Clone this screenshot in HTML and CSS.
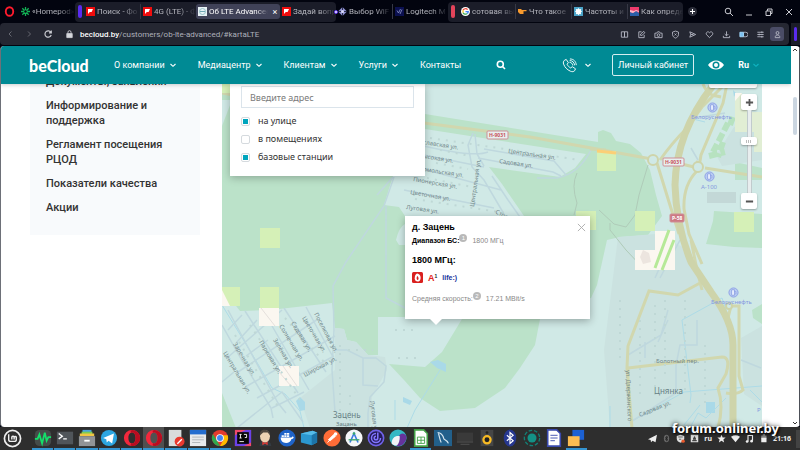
FILE: index.html
```html
<!DOCTYPE html>
<html lang="ru">
<head>
    <meta charset="UTF-8">
    <title>Об LTE Advanced</title>
    <link rel="stylesheet" href="styles.css">
</head>
<body>
    <!-- Shared icons -->
    <svg class="sprite" aria-hidden="true">
        <symbol id="onliner" viewBox="0 0 9 9"><path fill="#f00d0d" d="M0 0h9v9H0z"/><path fill="#fff" d="M2 2h5L5.6 5H3.8L2 7z"/></symbol>
        <symbol id="chevron" viewBox="0 0 8 8"><path d="M1.5 3 4 5.3 6.500 3" fill="none" stroke="currentColor" stroke-width="1.100"/></symbol>
        <symbol id="opera" viewBox="0 0 20 20"><path fill="#f2283c" fill-rule="evenodd" d="M10 1a9 9 0 1 0 0 18 9 9 0 0 0 0-18zm0 3c2.500 0 4 2.800 4 6s-1.500 6-4 6-4-2.800-4-6 1.500-6 4-6z"/><path fill="#b80d20" fill-rule="evenodd" d="M10 1c5 0 9 4 9 9s-4 9-9 9c-1.500-.5-2-1.500-1-3.200 3.500 1 5-2.300 5-5.800s-1.500-6.800-5-5.800C8 2.500 8.500 1.500 10 1z"/></symbol>
        <symbol id="fuel" viewBox="0 0 12 12"><circle cx="6" cy="6" r="5" fill="#b9cdf2" stroke="#8c9fe6"/><path d="M4 3h3v6H4zM7 5h1.500v3" fill="#eef4ff" stroke="#8094e0" stroke-width=".8"/></symbol>
    </svg>

    <!-- Browser tabs -->
    <div class="tabs">
        <button class="opera-menu" aria-label="Меню"><svg viewBox="0 0 10 10"><ellipse cx="5" cy="5" rx="3.400" ry="3.900" fill="none" stroke="#ff1b2d" stroke-width="1.700"/></svg></button>
        <button class="tab"><svg viewBox="0 0 9 9"><path d="M4.500 0v9M0 4.500h9M1.300 1.300l6.400 6.400M7.700 1.300 1.300 7.700" stroke="#12b155" stroke-width="1.300"/><circle cx="4.500" cy="4.500" r="1.200" fill="#02040f"/></svg><span>«Homepod»</span></button>
        <div class="island">
            <i class="island-mark purple"></i>
            <button class="tab"><svg><use href="#onliner"/></svg><span>Поиск - Фо</span></button>
            <button class="tab divided"><svg><use href="#onliner"/></svg><span>4G (LTE) - Ф</span></button>
            <button class="tab active"><svg viewBox="0 0 9 9"><path fill="#e8f2f5" d="M0 0h9v9H0z"/><circle cx="4.500" cy="4.500" r="3" fill="none" stroke="#93bfc6"/><path d="M2 4.500h5" stroke="#6fa8b4"/></svg><span>Об LTE Advanced</span><b>×</b></button>
            <button class="tab"><svg><use href="#onliner"/></svg><span>Задай вопр</span></button>
        </div>
        <div class="loose">
            <button class="tab"><svg viewBox="0 0 9 9"><path fill="#8d8fd0" d="m4.500 0 4.500 4.500L4.500 9 0 4.500z"/><path d="M4.500 0v9M0 4.500h9" stroke="#02040f" stroke-width=".7"/><circle cx="4.500" cy="4.500" r="1.500" fill="#dcdcff"/></svg><span>Выбор WiF</span></button>
            <button class="tab divided"><svg viewBox="0 0 9 9"><path fill="#0b1050" d="M0 0h9v9H0z"/><path d="M2 3.500 3.500 6l2-4M5 7l2-4.500" stroke="#8f97c9" fill="none" stroke-width=".8"/></svg><span>Logitech M</span></button>
            <i class="alert"></i>
        </div>
        <div class="island second">
            <i class="island-mark red"></i>
            <button class="tab"><svg viewBox="0 0 9 9"><circle cx="4.500" cy="4.500" r="4.500" fill="#fff"/><path d="M6.600 2.600A2.800 2.800 0 0 0 2 3.300" fill="none" stroke="#ea4335" stroke-width="1.200"/><path d="M2 3.300v2.400" stroke="#fbbc05" stroke-width="1.200"/><path d="M2 5.700a2.800 2.800 0 0 0 4.400.7" fill="none" stroke="#34a853" stroke-width="1.200"/><path d="M4.500 4.600h2.800a3 3 0 0 1-.9 1.900" fill="none" stroke="#4285f4" stroke-width="1.200"/></svg><span>сотовая вы</span></button>
            <button class="tab divided"><svg viewBox="0 0 9 9"><path fill="#f79a2e" d="M0 2h3l1 1h4.500v1.200H5.500V7H2L0 5z"/></svg><span>Что такое</span></button>
            <button class="tab divided"><svg viewBox="0 0 9 9"><path fill="#4aa3c8" d="M0 0h9v9H0z"/><path fill="#fff" d="m4.500 1 1 1.300 1.700-.4-.3 1.700 1.100 1-1.200 1 .3 1.600-1.600-.2-1 1.200-1-1.200-1.600.2.300-1.600-1.200-1 1.100-1-.3-1.700 1.700.4z"/></svg><span>Частоты и</span></button>
            <button class="tab divided"><svg viewBox="0 0 9 9"><path fill="#ee3b6c" d="M0 0h9v9H0z"/><path fill="#2a5fa8" d="M0 5l3 1 3-2 3 2v3H0z"/><path fill="#f9b9c8" d="M0 3l4 1 2-1 3 1v1L6 4 3 6 0 5z"/></svg><span>Как опреде</span></button>
        </div>
        <button class="new-tab" aria-label="Новая вкладка"><svg viewBox="0 0 9 9"><path d="M4.500 2v5M2 4.500h5"/></svg></button>
        <div class="window-buttons">
            <button aria-label="Поиск"><svg viewBox="0 0 10 10"><circle cx="4" cy="4" r="2.800"/><path d="m6 6 3 3"/></svg></button>
            <button aria-label="Свернуть"><svg viewBox="0 0 10 10"><path d="M2 8h6"/></svg></button>
            <button aria-label="Развернуть"><svg viewBox="0 0 10 10"><path d="M2 4h4.500v4.500H2zM3.500 4V2H8v4.500H6.500"/></svg></button>
            <button aria-label="Закрыть"><svg viewBox="0 0 10 10"><path d="m2 2 6 6M8 2 2 8"/></svg></button>
        </div>
    </div>

    <!-- Address bar -->
    <div class="toolbar">
        <div class="address">
            <button class="dim" aria-label="Назад"><svg viewBox="0 0 10 10"><path d="M6.500 2.500 4 5l2.500 2.500"/></svg></button>
            <button class="dim" aria-label="Вперёд"><svg viewBox="0 0 10 10"><path d="M4 2.500 6.500 5 4 7.500"/></svg></button>
            <button aria-label="Обновить"><svg viewBox="0 0 10 10"><path stroke-width="1.200" d="M8 3.500A3.200 3.200 0 1 0 8.200 6M8.300 1.500v2.300H6"/></svg></button>
            <svg class="padlock" viewBox="0 0 10 10"><path fill="#d6d8dd" d="M2 4.500h6V9H2z"/><path d="M3.300 4.500V3a1.700 1.700 0 0 1 3.400 0v1.500"/></svg>
            <span class="url"><b>becloud.by</b>/customers/ob-lte-advanced/#kartaLTE</span>
            <div class="tools">
                <button aria-label="Чтение"><svg viewBox="0 0 10 10"><path d="M1.500 2H5v6H1.500zM5 2h3.500v6H5z"/></svg></button>
                <button aria-label="Заметка"><svg viewBox="0 0 10 10"><path d="M5 2H2v6.500h6V5.500M4 6V4.500L7.500 1.500 8.800 3 5.500 6z"/></svg></button>
                <button aria-label="Снимок"><svg viewBox="0 0 10 10"><path d="M1 3.500h2l1-1.500h2l1 1.500h2v5H1z"/><circle cx="5" cy="5.700" r="1.500"/></svg></button>
                <button aria-label="Блокировка"><svg viewBox="0 0 10 10"><path d="M5 1.200 8.300 2.300V5c0 2-1.500 3.300-3.300 4C3.200 8.300 1.700 7 1.700 5V2.300zM4 4l2 2M6 4 4 6"/></svg></button>
                <button aria-label="Отправить"><svg viewBox="0 0 10 10"><path d="M2 2l6.500 3L2 8l1-3zM3 5h3"/></svg></button>
                <button aria-label="Избранное"><svg viewBox="0 0 10 10"><path d="M5 8.500 1.800 5.300C.2 3.500 3 .5 5 3c2-2.500 4.800.5 3.200 2.300z"/></svg></button>
                <button aria-label="Загрузки"><svg viewBox="0 0 10 10"><path d="M5 1.500v5M3 4.500l2 2 2-2M1.500 6.500v2h7v-2"/></svg></button>
                <button aria-label="Батарея"><svg viewBox="0 0 10 10"><path fill="#7cc0f0" stroke="#a5dcff" d="M1 2.500h4v5H1z"/><path d="M5 2.500h2.500a2.500 2.500 0 0 1 0 5H5"/></svg></button>
                <button aria-label="Настройки"><svg viewBox="0 0 10 10"><path d="M1.500 2.500h7M1.500 5h7M1.500 7.500h7M6.500 1.500v2M3.500 4v2M6.500 6.500v2"/></svg></button>
                <button class="profile" aria-label="Профиль"><svg viewBox="0 0 10 10"><circle cx="5" cy="3.300" r="1.600"/><path d="M2.500 8.500v-1C2.500 5 7.500 5 7.500 7.500v1z"/></svg></button>
            </div>
        </div>
        <div class="panel-toggle"><i></i></div>
    </div>

    <!-- Page -->
    <div class="page">
        <div class="site">
            <header>
                <a class="logo" href="#">beCloud</a>
                <nav>
                    <a href="#">О компании<svg><use href="#chevron"/></svg></a>
                    <a href="#">Медиацентр<svg><use href="#chevron"/></svg></a>
                    <a href="#">Клиентам<svg><use href="#chevron"/></svg></a>
                    <a href="#">Услуги<svg><use href="#chevron"/></svg></a>
                    <a href="#">Контакты</a>
                </nav>
                <button class="find" aria-label="Поиск"><svg viewBox="0 0 10 10"><circle cx="4.300" cy="4.300" r="3"/><path d="M6.500 6.500 9 9"/></svg></button>
                <div class="header-right">
                    <button class="phone" aria-label="Телефон">
                        <svg viewBox="0 0 16 16"><path d="M2.500 2.500 4.500 1.500 6.800 5 5.400 6.600c.8 1.900 2 3 3.900 4l1.600-1.400 3.500 2.300-.9 2c-1 1.200-2.600 1.400-4.500.6C5.500 12.500 3 10 1.700 6.500c-.6-1.600-.2-3 .8-4zM8 4.500c2 .2 3.300 1.500 3.500 3.500M8.200 2.700c3 .1 5 2 5.200 5.100M8.400 1c4 0 6.600 2.600 6.800 6.600"/></svg>
                        <svg class="arrow"><use href="#chevron"/></svg>
                    </button>
                    <a class="cabinet" href="#">Личный кабинет</a>
                    <button class="eye" aria-label="Версия для слабовидящих"><svg viewBox="0 0 16 10"><path fill="#fff" fill-rule="evenodd" d="M0 5c4-6 12-6 16 0-4 6-12 6-16 0zm8-3.500a3.500 3.500 0 1 0 0 7 3.500 3.500 0 0 0 0-7z"/><circle cx="8" cy="5" r="2" fill="#fff"/></svg></button>
                    <button class="lang">Ru<svg class="arrow"><use href="#chevron"/></svg></button>
                </div>
            </header>

            <main>
                <aside>
                    <a href="#">Документы, заявления</a>
                    <a href="#">Информирование и поддержка</a>
                    <a href="#">Регламент посещения РЦОД</a>
                    <a href="#">Показатели качества</a>
                    <a href="#">Акции</a>
                </aside>

                <section class="map">
                    <svg class="map-canvas" viewBox="222 84 540 344" preserveAspectRatio="xMinYMin slice">
                        <path class="land" d="M222 84h540v344H222z"/>

                        <!-- forest -->
                        <path class="forest" d="M222 84H425V114L598 142V132L603 130 611 133 616 141 630 144 641 153 650 170 656 195 662 216 648 235 620 237 607 240 603 258 597 285 591 298 550 305 540 319 535 345 520 368 505 388 475 408 440 411 420 398 404 380 389 364 425 367 442 352 462 319V317H378V355H368L356 342 347 340 344 329 335 328 332 303 270 310 240 311 222 288z"/>
                        <path class="forest" d="M222 393 236 428H222zM706 244l7-23 1-10 48 3v34l-28-1zM752 310l10-6v20l-9-6z"/>
                        <path class="forest" d="M735 180h27v-12l-27-6z"/>
                        <path class="land" d="M393 176 425 129 586 154 575 168 560 177 489 167 502 184 524 216H405L399 207 384 205z"/>
                        <path class="land" d="M405 224q-6 3-9 16l3 5h6z"/>
                        <path class="land" d="M222 100h10l-10 26z"/>
                        <path class="town" d="M335 328 344 329 347 340 356 342 368 355 385 357 387 370 372 397 370 428H310L300 398 335 370zM618 237 656 234 685 248 727 312 732 345V428H610L604 350z"/>
                        <path class="town" d="M741 338l21-12v80l-18-12zM716 155l18-28 28-6v39l-40 6z"/>
                        <path fill="#c3d8d7" d="M707 192h29v11h-29z"/>

                        <!-- water -->
                        <path class="water-fill" d="M296 401l4-4 5 5v8l-5 1zM403 397l9 4-2 4-7-3zM430 362l8-2 8 4v8l-9-4zM706 402h9v11h-9zM733 90l3 3-2 4z"/>
                        <path class="river" d="M222 305 252 354 272 388 285 394 300 411 304 428M440 370 415 410 407 428M395 420v-20M682 320l40-22 12 35M682 320l9 75-1 8M634 420l50-28 78-6M610 428V406M750 390l20 20M690 428l8-15 8 5 20-20M700 405l-16 20M705 122l-12-3"/>

                        <!-- minor streets -->
                        <path class="street" d="M394 177 384 206 346 262 333 286 334 330 332 370 335 412M386 206V298L407 309M393 177 377 195M335 350h12l16 8h13l10 8-2 16-14 15-2 16v17M363 358v27l15 1M415 144q58 14 73 8M424 155l60 12M419 168l82 22M404 190l90 18M473 133l-5 12 4 22 12 13 20 34M475 134l2 20 7 12M484 149l70 12 12 14M478 158l75 14 8 4M591 150q-12 24-34 28h-20M492 176l16 24 14 20"/>
                        <path class="street" d="M222 325l18 32 31 51 2 10M228 310l50 93 8 10M245 311l53 82M264 312l45 78M284 308l42 64M306 307l27 50M227 358l55-48M238 372l80-53M247 386l88-50M257 398l77-42M222 382l12-10M237 428l45-36 21 30M228 330l14-15M236 343l21-23M246 356l22-16M272 408l32-16"/>
                        <path class="street" d="M628 355l33-20 7-25M668 320l-10 22M645 358v-16M697 320v25h-17l-4 20v28l-47 30M698 160l-7-12M700 117l25-4M655 278 672 240M660 278 680 240M741 360l20 8"/>

                        <!-- main roads -->
                        <path class="road gold" d="M222 93 233 95M424 123 530 137 597 149 657 160M660 160q12-17 26-31l16-22 22-22M657 163l12 39 10 32M590 149l16 1M669 161l25 6M694 169l4-8M699 167l2-12 22-52 4-19M705 168l57 9M697 171q-14 14-13 38l5 25 13 30M703 84q3 8 9 11l9 2M691 240l6 30 5 20M728 318l3-12h8v70l4 14q-5 5-17 3M718 428q6-22 0-40l8-14q5-17-4-17l-94 11M700 283l-22 12-29-4-21 55-1 22 5 60M628 367v22"/>
                        <path class="highway" d="M714 84Q676 132 675 185 676 225 691 262L711 292Q733 322 733 345V428"/>
                        <circle class="ring" cx="653" cy="160" r="5"/><circle class="ring" cx="698" cy="167" r="5"/><circle class="ring" cx="729" cy="306" r="3"/>
                        <path class="trail" d="M648 165l-9 30-4 20-9 12-12-3-15-14M610 223v7l16 20 18 19M577 173q-6 12 0 30l-3 12"/>
                        <path d="M713 152l15-29M723 142l-5 15M709 156l16-4M730 125l3-8" fill="none" stroke="#b7e2c0" stroke-width="6" stroke-dasharray="9 3"/>

                        <!-- coverage cells -->
                        <path class="cell" d="M222 84h8v9h-8zM260 228h20v20h-20zM222 287h18v19h-18zM260 287h19v21h-19zM597 151h19v20h-19zM576 211h20v19h-20zM635 211h20v20h-20zM734 212h20v20h-20z"/>
                        <path class="cell-pale" d="M735 93h7v7h8v12h12v40h-8v-20h-19z"/>
                        <path class="cell-empty" d="M259 308h20v18h-20zM279 366h20v20h-20zM222 290l8 16h-8zM655 231h20v39h-40v-20h20zM735 93h7l-7 8z"/>
                        <path d="M655 268 669 230M662 270 674 240" stroke="#b6e998" stroke-width="3"/>
                        <path d="M597 151l19 2" stroke="#fbcf76" stroke-width="3"/>
                        <path d="M261 308l14 18M283 366l14 20M279 372l12 14" stroke="#e5e0dc"/>
                        <path d="M643 250l6 3 2 9-8 2-3-7z" fill="#ece5df"/>

                        <!-- houses -->
                        <path class="houses" d="M430 138l150 22M440 150l30 6M436 163l32 6M427 178l45 9M415 199l90 14M235 335l45 75M250 325l50 75M285 318l40 45M340 345v75M350 395v30M655 305v90M665 300v80M640 320v80M685 300v90M705 345v60M620 300v60M348 350h25M395 330h20M398 358h20"/>

                        <!-- labels -->
                        <g class="street-name">
                            <text transform="translate(508 153) rotate(8)">Центральная ул.</text>
                            <text transform="translate(499 163) rotate(8)">Садовая ул.</text>
                            <text transform="translate(423 144) rotate(9)">славская ул.</text>
                            <text transform="translate(423 158) rotate(9)">ысокая ул.</text>
                            <text transform="translate(423 171) rotate(9)">омольская ул.</text>
                            <text transform="translate(413 181) rotate(10)">Пионерская ул.</text>
                            <text transform="translate(410 194) rotate(10)">Цветочная ул.</text>
                            <text transform="translate(406 209) rotate(8)">Луговая ул.</text>
                            <text transform="translate(474 207) rotate(-82)">Центральная ул.</text>
                            <text transform="translate(495 213) rotate(28)">Стор</text>
                            <text transform="translate(223 353) rotate(59)">Центральная ул.</text>
                            <text transform="translate(233 344) rotate(59)">Заречная ул.</text>
                            <text transform="translate(259 342) rotate(59)">Парковая ул.</text>
                            <text transform="translate(273 340) rotate(59)">Зелёная ул.</text>
                            <text transform="translate(279 326) rotate(59)">Солнечная ул.</text>
                            <text transform="translate(291 323) rotate(59)">Садовая ул.</text>
                            <text transform="translate(302 318) rotate(59)">Цветочная ул.</text>
                            <text transform="translate(314 314) rotate(62)">Поселковая ул.</text>
                            <text transform="translate(305 377) rotate(-28)">Широкая ул.</text>
                            <text transform="translate(370 401) rotate(83)">Луговая у</text>
                            <text transform="translate(626 370) rotate(88)">ул. Дзержинского</text>
                            <text transform="translate(640 417) rotate(-22)">Садовая ул.</text>
                            <text x="656" y="363">Болотный пер.</text>
                        </g>
                        <text class="place" x="333" y="418">Зацень</text>
                        <text class="place small" x="336" y="426">Зацань</text>
                        <text class="place" x="654" y="394">Цнянка</text>
                        <text class="station" x="691" y="119">Белоруснефть</text>
                        <text class="station" x="701" y="189">А-100</text>
                        <text class="station" x="711" y="304">Белоруснефть</text>
                        <text class="station" x="757" y="412">Р</text>
                        <use href="#fuel" x="707" y="102" width="11" height="11"/>
                        <use href="#fuel" x="704" y="171" width="11" height="11"/>
                        <use href="#fuel" x="728" y="287" width="11" height="11"/>
                        <g class="shield">
                            <rect x="487" y="131" width="21" height="8" rx="1"/><text x="489" y="137">Н-9031</text>
                            <rect x="663" y="158" width="21" height="8" rx="1"/><text x="665" y="164">Н-9031</text>
                            <rect class="filled" x="670" y="214" width="14" height="8" rx="1"/><text class="white" x="672" y="220">Р-58</text>
                        </g>
                    </svg>

                    <form class="filter">
                        <input type="text" placeholder="Введите адрес" aria-label="Введите адрес">
                        <label><input type="checkbox" checked>на улице</label>
                        <label><input type="checkbox">в помещениях</label>
                        <label><input type="checkbox" checked>базовые станции</label>
                    </form>

                    <div class="balloon">
                        <button class="close" aria-label="Закрыть"><svg viewBox="0 0 10 10"><path d="m1 1 8 8M9 1 1 9"/></svg></button>
                        <h3>д. Зацень</h3>
                        <p class="range"><b>Диапазон БС:</b><sup>1</sup><span>1800 МГц</span></p>
                        <h3>1800 МГц:</h3>
                        <div class="operators">
                            <svg viewBox="0 0 11 11"><rect width="11" height="11" rx="1.500" fill="#d9201e"/><path fill="#fff" d="M5 1.500c3 .5 4 3 3.500 5.500C8 9 7 9.500 5.500 9.500S2.700 8.500 2.700 6.500C2.700 4 3.500 2.300 5 1.500z"/><path fill="#d9201e" d="M5.500 4c1 1 1.500 3 .5 4-1.500 0-2-2.500-.5-4z"/></svg>
                            <span class="a1">A<small>1</small></span>
                            <span class="life">life:)</span>
                        </div>
                        <p class="speed">Средняя скорость:<sup>2</sup><span>17.21 MBit/s</span></p>
                    </div>

                    <div class="layer-button"></div>
                    <div class="zoom">
                        <button aria-label="Приблизить"><svg viewBox="0 0 10 10"><path d="M5 1v8M1 5h8"/></svg></button>
                        <div class="track"><i></i></div>
                        <button aria-label="Отдалить"><svg viewBox="0 0 10 10"><path d="M1 5h8"/></svg></button>
                    </div>
                </section>
            </main>
        </div>
        <div class="scrollbar">
            <svg viewBox="0 0 8 8"><path d="M2 5l2-2 2 2"/></svg>
            <i></i>
            <svg viewBox="0 0 8 8"><path d="M2 3l2 2 2-2"/></svg>
        </div>
    </div>

    <!-- Desktop panel -->
    <footer>
        <button class="start" aria-label="Меню"><svg viewBox="0 0 20 20"><circle cx="10" cy="10" r="8.500" fill="none" stroke="#eee" stroke-width="1.800"/><path d="M6 5.500V11a2 2 0 0 0 2 2h4a2 2 0 0 0 2-2V8.500a1.300 1.300 0 0 0-2.300 0V11m0-2.500a1.300 1.300 0 0 0-2.400 0V11" fill="none" stroke="#eee" stroke-width="1.500"/></svg></button>
        <div class="tasks">
            <span class="open"><svg viewBox="0 0 20 20"><rect x="1" y="1" width="18" height="18" rx="5" fill="#454b49"/><path d="M1 11h3l2-5 3 10 3-12 2 9 2-4h3" fill="none" stroke="#14e06a" stroke-width="2"/></svg></span>
            <span class="open"><svg viewBox="0 0 20 20"><path fill="#50555a" d="M1 3h18v14H1z"/><path d="M3 5l4 3-4 3M8 11h4" fill="none" stroke="#fff" stroke-width="1.500"/></svg></span>
            <span class="open"><svg viewBox="0 0 20 20"><path fill="#47a4dd" d="M5 1h10v3H5z"/><path fill="#7ccb54" d="M4 3h12v3H4z"/><path fill="#f1c644" d="M2 5h16v3H2z"/><path fill="#929497" d="M1 8h18v11H1z"/><path fill="#fff" d="M7 12h6v2H7z"/></svg></span>
            <span class="open"><svg viewBox="0 0 20 20"><circle cx="10" cy="10" r="9" fill="#2ca5e0"/><path fill="#fff" d="m3.500 10 12-5-2 11-4-3-2 2-.5-3.500z"/></svg></span>
            <span class="open"><svg><use href="#opera"/></svg></span>
            <span class="open current"><svg><use href="#opera"/></svg></span>
            <span class="open"><svg viewBox="0 0 20 20"><path fill="#d9dcdc" d="M2 1h14v18H2z"/><circle cx="14" cy="14" r="5.500" fill="#e8392e"/><path d="m11.500 16.500 5-5" stroke="#fff" stroke-width="1.500"/></svg></span>
            <span class="open"><svg viewBox="0 0 20 20"><path fill="#e8eaec" d="M1 1h18v18H1z"/><path fill="#246dcf" d="M1 1h18v5H1z"/><path d="M3.500 9h13M3.500 12h13M3.500 15h9" stroke="#aeb4b8"/></svg></span>
            <span class="open"><svg viewBox="0 0 20 20"><circle cx="10" cy="10" r="9" fill="#e33b2e"/><path fill="#2da94f" d="M2.200 5.500 10 19A9 9 0 0 1 2.200 5.500z"/><path fill="#fdbd00" d="M18.500 7A9 9 0 0 1 10 19l4-7-1-5z"/><circle cx="10" cy="10" r="4.300" fill="#fff"/><circle cx="10" cy="10" r="3.300" fill="#4285f4"/></svg></span>
            <span><svg viewBox="0 0 20 20"><path fill="#ef4a6b" d="M1 1h18v18H1z"/><path fill="#6a42e8" d="M1 7l12-6h6v14l-8 4H1z"/><path fill="#080808" d="M3.500 3.500h13v13h-13z"/><path d="M6 6h2.500M7.200 6v4M6 10h2.500M11 6h3v3.500h-2M6 14h5" stroke="#fff" fill="none"/></svg></span>
            <span><svg viewBox="0 0 20 20"><path fill="#333b41" d="M4 19c0-5 2-6 6-6s7 2 7 6z"/><ellipse cx="10" cy="8" rx="5.500" ry="7" fill="#eed2b2"/><path fill="#51483f" d="M4.500 7C3 2 8 0 11 1s5 2 4.500 6L13 4 8 4z"/><path fill="#d83a35" d="m7 14 3 1.500 3-1.500v4l-3-1.500L7 18z"/></svg></span>
            <span><svg viewBox="0 0 20 20"><circle cx="10" cy="10" r="9.500" fill="#1f63c8"/><path fill="#fff" d="M3 9.500h12l1.500-1.500 1 1.500c-.5 1.500-2 1.700-2.500 1.700-1 3-3 4.300-6 4.300-4 0-6-2.500-6-6zM4 7h2.500v2H4zM7 7h2.500v2H7zM10 7h2.500v2H10zM7 4.500h2.500v2H7zM10 4.500h2.500v2H10z"/></svg></span>
            <span><svg viewBox="0 0 20 20"><path fill="#2b97cf" d="M1 5 14 2l5 2v11l-6 3-12-3z"/><path fill="#55bbe8" d="m1 5 13-3 5 2-6 3z"/><path fill="#1d74a8" d="m13 7 6-3v11l-6 3z"/></svg></span>
            <span><svg viewBox="0 0 20 20"><circle cx="10" cy="10" r="9.500" fill="#ff6c37"/><path d="m5 15 8-8M6 12l6-6 2 2-6 5z" fill="#fff" stroke="#fff"/><circle cx="14" cy="5.500" r="2" fill="#fff"/></svg></span>
            <span><svg viewBox="0 0 20 20"><circle cx="10" cy="10" r="9.500" fill="#f5f7f8"/><path d="M5.500 15 10 5l4.500 10" fill="none" stroke="#3d7be0" stroke-width="1.800"/><path d="M4 12h12" stroke="#3aa76d" stroke-width="1.500"/><circle cx="10" cy="5" r="1.500" fill="#3aa76d"/></svg></span>
            <span><svg viewBox="0 0 20 20"><circle cx="10" cy="10" r="8.500" fill="#241c59" stroke="#6f62e8" stroke-width="1.800"/><path d="M10 5a5 5 0 1 0 5 5M10 8a2 2 0 1 0 2 2V4" fill="none" stroke="#8276ff" stroke-width="1.700"/></svg></span>
            <span><svg viewBox="0 0 20 20"><circle cx="10" cy="10" r="9.500" fill="#34b8c4"/><path fill="#66339b" d="M8 19c7 1 12-5 11.300-11C17 3 12 5 11 8s1 6-3 11z"/><path fill="#f2f4f6" d="M3 16c0-6 4-9 9-8 0 5-1 8-3 10-3 1-5-1-6-2z"/></svg></span>
            <span class="open"><svg viewBox="0 0 20 20"><path fill="#fff" stroke="#43a047" stroke-width="1.800" d="M3 1h10l4 4v14H3z"/><path d="M6 9h8v7H6zM6 12.500h8M10 9v7" fill="none" stroke="#43a047"/></svg></span>
            <span><svg viewBox="0 0 20 20"><path fill="#22608b" d="M0 1h20v18H0z"/><path d="M4 4c4 0 6 3 7 7 2 1 4 2 5 5M5 5c1 3 1 6 3 10" fill="none" stroke="#d5e5ef" stroke-width="1.300"/></svg></span>
            <span><svg viewBox="0 0 20 20"><path fill="#3a3a3a" d="M1 4h18v10H1z"/><path d="M1 14.500h18M5 17h10" stroke="#555"/></svg></span>
            <span><svg viewBox="0 0 20 20"><path fill="#464646" d="M3 1h14v18H3z"/><circle cx="10" cy="12" r="4" fill="#222" stroke="#f8ba24" stroke-width="2.500"/><circle cx="10" cy="4" r="1.500" fill="#222"/></svg></span>
            <span><svg viewBox="0 0 20 20"><ellipse cx="10" cy="10" rx="7" ry="9.500" fill="#26378f"/><path d="m6.500 7 7 6-3.500 3V4l3.500 3-7 6" fill="none" stroke="#fff" stroke-width="1.300"/></svg></span>
            <span><svg viewBox="0 0 20 20"><circle cx="10" cy="10" r="8.500" fill="none" stroke="#137f75" stroke-width="1.500" stroke-dasharray="4 2"/><circle cx="10" cy="10" r="5" fill="#139286"/></svg></span>
            <span><svg viewBox="0 0 20 20"><path fill="#fff" stroke="#3949ab" stroke-width="1.800" d="M3 1h10l4 4v14H3z"/><path d="M6 7h8M6 10h8M6 13h5" stroke="#3949ab"/></svg></span>
            <span class="open"><svg viewBox="0 0 20 20"><path fill="#1c61d3" d="M6 1h13v11H6z"/><path fill="#fbbd52" d="M1 8h13v11H1z"/></svg></span>
        </div>
        <div class="tray">
            <svg viewBox="0 0 12 12"><path fill="#eee" d="M0 7 12 1l-2 10-4-2-2 2-.5-3z"/></svg>
            <svg viewBox="0 0 12 12"><ellipse cx="6" cy="6" rx="3.500" ry="5" fill="#666"/><path d="m4 4.500 4 3L6 9V3l2 1.500-4 3" fill="none" stroke="#222"/></svg>
            <svg viewBox="0 0 12 12"><path d="M6 1 11 2.500V6c0 3-2 4.500-5 5.500C3 10.500 1 9 1 6V2.500z" fill="#ddd"/><path d="M3 4h6M4 7h3" stroke="#444"/><circle cx="9.500" cy="9.500" r="2.300" fill="#e8592c"/></svg>
            <svg viewBox="0 0 12 12"><path fill="#ddd" d="M1 1h10v10H1z"/><path fill="#444" d="M3 8h6v1.500H3zM6 2.500 8 6v1.500H4V6z"/></svg>
            <span>ru</span>
            <svg viewBox="0 0 12 12"><path fill="#eee" d="m6 1 1.500 3.500 4 .3-3 2.500 1 3.900L6 9.100l-3.500 2.100 1-3.900-3-2.500 4-.3z"/></svg>
            <svg viewBox="0 0 12 12"><path fill="#eee" d="M0 3.500c4-2.500 8-2.500 12 0L6 11z"/></svg>
            <svg viewBox="0 0 12 12"><path d="M4 10V2h6v7" fill="none" stroke="#eee" stroke-width="1.500"/><circle cx="2.800" cy="10" r="1.800" fill="#eee"/><circle cx="8.800" cy="9.500" r="1.800" fill="#eee"/></svg>
            <svg viewBox="0 0 12 12"><path fill="#888" d="M5 0h3v2H5zM3 2h7v4H3z"/><path fill="#eee" d="M3 5h7v6H3z"/></svg>
            <time>21:16</time>
            <i></i>
        </div>
    </footer>
    <div class="watermark">forum.onliner.by</div>
</body>
</html>
```
FILE: styles.css
```css
* {
    box-sizing: border-box;
}

body {
    display: flex;
    flex-direction: column;
    height: 100vh;
    margin: 0;
    overflow: hidden;
    background-color: #02040f;
    font-family: 'Noto Sans', sans-serif;
    color: #333;
}

button {
    display: flex;
    align-items: center;
    justify-content: center;
    padding: 0;
    border: none;
    background: none;
    color: inherit;
    font-family: inherit;
}

a {
    color: inherit;
    text-decoration: none;
}

h3, p {
    margin: 0;
}

.sprite {
    position: absolute;
    width: 0;
    height: 0;
}

/* Tabs */
.tabs {
    display: flex;
    align-items: center;
    height: 23px;
    flex: none;
    color: #b4b5bd;
    font-family: Roboto, sans-serif;
}

.opera-menu {
    width: 19px;
}

.opera-menu svg {
    width: 11px;
    height: 11px;
}

.island, .loose {
    display: flex;
    align-items: center;
    height: 20px;
    border-radius: 4px;
}

.loose {
    position: relative;
}

.alert {
    position: absolute;
    left: -2px;
    width: 4px;
    height: 4px;
    border: 1px solid #5a2bf0;
    border-radius: 50%;
    background-color: #fff;
}

.island {
    background-color: #1b1d29;
}

.island-mark {
    width: 4px;
    height: 13px;
    margin: 0 2px 0 3px;
    border-radius: 2px;
}

.purple {
    background-color: #5a2bf0;
}

.red {
    margin-right: 4px;
    background-color: #e3445a;
}

.tab {
    width: 56px;
    height: 15px;
    padding-left: 2px;
    gap: 2px;
    font-size: 8px;
    justify-content: flex-start;
    border-radius: 3px;
}

.tab svg {
    width: 9px;
    height: 9px;
    flex: none;
}

.tab span {
    flex: 1;
    overflow: hidden;
    white-space: nowrap;
    text-align: left;
    line-height: 14px;
    -webkit-mask-image: linear-gradient(to right, #000 60%, transparent);
    mask-image: linear-gradient(to right, #000 60%, transparent);
}

.tab b {
    width: 10px;
    font-size: 9px;
    font-weight: normal;
}

.divided {
    border-left: 1px solid #363845;
    border-radius: 0;
}

.tab.active {
    width: 84px;
    background-color: #404258;
    color: #fff;
}

.tab.active span {
    -webkit-mask-image: linear-gradient(to right, #000 80%, transparent);
    mask-image: linear-gradient(to right, #000 80%, transparent);
}

.new-tab {
    width: 9px;
    height: 9px;
    margin-left: 5px;
    border-radius: 50%;
    background-color: #2e303c;
}

.new-tab svg {
    width: 9px;
    height: 9px;
    stroke: #fff;
}

.window-buttons {
    display: flex;
    gap: 10px;
    margin-left: auto;
    padding-right: 6px;
}

.window-buttons svg, .address svg {
    width: 10px;
    height: 10px;
    fill: none;
    stroke: #c9cad0;
}

/* Address bar */
.toolbar {
    display: flex;
    gap: 2px;
    height: 23px;
    flex: none;
    padding-bottom: 1px;
}

.address {
    flex: 1;
    display: flex;
    align-items: center;
    padding: 0 5px;
    background-color: #252732;
    border-radius: 4px;
}

.address > button {
    width: 10px;
    margin-right: 9px;
}

.address .dim {
    opacity: 0.4;
}

.address .padlock {
    width: 9px;
    margin: 0 6px 0 3px;
}

.url {
    flex: 1;
    color: #aeb1bb;
    font-family: Roboto, sans-serif;
    font-size: 8px;
}

.url b {
    color: #fff;
    font-weight: 500;
}

.tools {
    display: flex;
    gap: 3px;
}

.tools button {
    width: 14px;
    height: 14px;
}

.tools svg {
    width: 9px;
    height: 9px;
    stroke: #b6b8c4;
}

.tools .profile {
    background-color: #4a4c66;
    border-radius: 3px;
}

.panel-toggle {
    display: flex;
    justify-content: center;
    align-items: center;
    width: 9px;
    background-color: #1b1d29;
}

.panel-toggle i {
    width: 3px;
    height: 14px;
    background-color: #5a2bf0;
    border-radius: 2px;
}

/* Page */
.page {
    display: flex;
    flex: 1;
    min-height: 0;
    border-left: 1px solid #6d7078;
    border-radius: 4px;
    background-color: #fff;
    overflow: hidden;
}

.site {
    flex: 1;
    display: flex;
    flex-direction: column;
    overflow: hidden;
}

header {
    position: relative;
    z-index: 1;
    display: flex;
    align-items: center;
    height: 38px;
    flex: none;
    padding: 0 31px 0 28px;
    background-color: #008a94;
    box-shadow: 0 1px 4px rgba(0, 0, 0, 0.2);
    color: #fff;
    font-family: Roboto, sans-serif;
    font-size: 9px;
}

.logo {
    width: 85px;
    font-family: Lato, sans-serif;
    font-size: 16px;
    font-weight: 900;
}

nav {
    display: flex;
    gap: 21px;
}

nav a {
    display: flex;
    align-items: center;
    gap: 4px;
}

nav svg, .arrow {
    width: 8px;
    height: 8px;
}

.find {
    margin-left: 35px;
}

.find svg {
    width: 10px;
    height: 10px;
    fill: none;
    stroke: #fff;
    stroke-width: 1.6;
}

.header-right {
    display: flex;
    align-items: center;
    gap: 14px;
    margin-left: auto;
}

.phone {
    gap: 7px;
    margin-right: 6px;
}

.phone svg:first-child {
    width: 15px;
    height: 15px;
    fill: none;
    stroke: #fff;
}

.cabinet {
    padding: 4px 5px;
    border: 1px solid #d5eef0;
    border-radius: 2px;
    line-height: 12px;
}

.eye svg {
    width: 16px;
    height: 10px;
}

.lang {
    gap: 3px;
    font-size: 9px;
    font-weight: bold;
}

.lang .arrow {
    color: #10b5c2;
}

main {
    flex: 1;
    display: grid;
    grid-template-columns: 170px 1fr;
    gap: 22px;
    min-height: 0;
    padding: 0 29px;
}

/* Sidebar */
aside {
    display: flex;
    flex-direction: column;
    gap: 9px;
    align-self: start;
    margin-top: -10px;
    padding: 0 16px 20px;
    background-color: #f8fafc;
    font-family: Roboto, sans-serif;
    font-size: 11px;
    line-height: 15px;
    font-weight: 500;
}

/* Map */
.map {
    position: relative;
    min-height: 0;
    overflow: hidden;
}

.map-canvas {
    display: block;
    width: 100%;
    height: 100%;
}

.land { fill: #d0e9e6; }
.forest { fill: #bbe2c9; }
.town { fill: #cbe2e0; }
.water-fill { fill: #a9d9e8; }
.cell { fill: #d5f0b7; }
.cell-pale { fill: #e1eed4; }
.cell-empty { fill: #fbf7f0; }

.river, .street, .road, .highway, .trail, .houses, .ring {
    fill: none;
}

.river { stroke: #addbe7; }
.street { stroke: #bfd8de; stroke-width: 1.5; }
.gold { stroke: #d1d7ae; stroke-width: 3; }
.highway { stroke: #ced4aa; stroke-width: 7; }
.ring { fill: #d0e9e6; stroke: #ced4aa; stroke-width: 2; }
.trail { stroke: #afcbb8; }
.houses { stroke: #bfd8d6; stroke-width: 2; stroke-dasharray: 2 6; }

.street-name text {
    fill: #71878a;
    font-size: 6px;
}

.place {
    fill: #667f84;
    font-size: 8px;
}

.place.small {
    font-size: 6px;
}

.station {
    fill: #8597df;
    font-size: 6px;
}

.shield rect {
    fill: #e7f0ef;
    stroke: #cf8f97;
}

.shield .filled {
    fill: #cd7983;
}

.shield text {
    fill: #c9515c;
    font-size: 5px;
    font-weight: bold;
}

.shield .white {
    fill: #fff;
}

/* Address filter */
.filter {
    position: absolute;
    top: 0;
    left: 8px;
    display: flex;
    flex-direction: column;
    gap: 4px;
    width: 195px;
    padding: 2px 11px 12px;
    background-color: #fff;
    box-shadow: 0 2px 8px rgba(0, 0, 0, 0.25);
    font-size: 9px;
}

.filter input[type="text"] {
    width: 100%;
    height: 22px;
    margin-bottom: 2px;
    padding: 0 8px;
    border: 1px solid #dbe4eb;
    font: inherit;
}

.filter input::placeholder {
    color: #7a7a7a;
}

.filter label {
    display: flex;
    align-items: center;
    gap: 8px;
    line-height: 14px;
}

.filter input[type="checkbox"] {
    appearance: none;
    width: 9px;
    height: 9px;
    margin: 0;
    border: 1px solid #d5dade;
    border-radius: 2px;
}

.filter input[type="checkbox"]:checked {
    padding: 1px;
    background: #00a5bd content-box;
    background-clip: content-box;
}

/* Balloon */
.balloon {
    position: absolute;
    top: 132px;
    left: 183px;
    width: 185px;
    height: 103px;
    padding: 5px 7px;
    background-color: #fff;
    box-shadow: 0 2px 8px rgba(0, 0, 0, 0.3);
    font-family: 'Liberation Sans', sans-serif;
    font-size: 7px;
    color: #888;
}

.balloon::after {
    content: "";
    position: absolute;
    top: 100%;
    left: 25px;
    border: 6px solid transparent;
    border-top-color: #fff;
    border-bottom: none;
}

.balloon h3 {
    color: #000;
    font-size: 9px;
    line-height: 12px;
}

.balloon p {
    line-height: 16px;
}

.balloon .range {
    margin-bottom: 5px;
}

.balloon b {
    color: #000;
}

.balloon sup {
    display: inline-block;
    width: 8px;
    height: 8px;
    margin-right: 5px;
    border-radius: 50%;
    background-color: #b9b9b9;
    color: #fff;
    font-size: 6px;
    line-height: 8px;
    text-align: center;
}

.balloon .close {
    position: absolute;
    top: 7px;
    right: 4px;
}

.balloon .close svg {
    width: 9px;
    height: 9px;
    stroke: #aaa;
}

.operators {
    display: flex;
    align-items: center;
    gap: 5px;
    height: 11px;
    margin: 6px 0 8px;
    font-weight: bold;
}

.operators svg {
    width: 11px;
    height: 11px;
}

.a1 {
    color: #e2231a;
    font-size: 9px;
}

.a1 small {
    color: #222;
    font-size: 5px;
    vertical-align: top;
}

.life {
    color: #17349c;
}

/* Map controls */
.layer-button {
    position: absolute;
    top: 0;
    right: 5px;
    width: 48px;
    height: 4px;
    background-color: #fff;
    border-radius: 0 0 2px 2px;
    box-shadow: 0 1px 2px rgba(0, 0, 0, 0.3);
}

.zoom {
    position: absolute;
    top: 10px;
    right: 5px;
    display: flex;
    flex-direction: column;
    align-items: center;
}

.zoom button {
    width: 16px;
    height: 16px;
    background-color: #fff;
    border-radius: 2px;
    box-shadow: 0 1px 2px rgba(0, 0, 0, 0.3);
}

.zoom svg {
    width: 9px;
    height: 9px;
    stroke: #555;
    stroke-width: 2;
}

.track {
    display: flex;
    justify-content: center;
    width: 5px;
    height: 83px;
    padding-top: 27px;
    background-color: #e8edee;
    border: 1px solid #c1cbcd;
    border-width: 0 1px;
}

.track i {
    flex: none;
    width: 16px;
    height: 8px;
    background: #fff repeating-linear-gradient(to right, #bbb 0 1px, transparent 1px 2px) center / 6px 3px no-repeat;
    border-radius: 2px;
    box-shadow: 0 1px 2px rgba(0, 0, 0, 0.3);
}

/* Scrollbar */
.scrollbar {
    display: flex;
    flex-direction: column;
    align-items: center;
    width: 9px;
    border-right: 1px solid #4c4f57;
}

.scrollbar svg {
    width: 8px;
    height: 8px;
    fill: none;
    stroke: #333;
}

.scrollbar i {
    width: 4px;
    height: 38px;
    margin: 43px 0 auto;
    border-radius: 2px;
    background-color: #cbd6e1;
}

/* Desktop panel */
footer {
    display: flex;
    align-items: center;
    height: 23px;
    flex: none;
    background-color: #2e2e2e;
    color: #eee;
}

.start {
    width: 24px;
    margin-right: 8px;
}

.start svg {
    width: 19px;
    height: 19px;
}

.tasks {
    display: flex;
    width: 69.5%;
    height: 100%;
}

.tasks span {
    flex: 1;
    display: flex;
    align-items: center;
    justify-content: center;
    margin-right: 1px;
    border-bottom: 2px solid transparent;
}

.tasks .open {
    border-bottom-color: #3494d0;
}

.tasks .current {
    background-color: #505050;
}

.tasks svg {
    width: 18px;
    height: 18px;
}

.tray {
    display: flex;
    align-items: center;
    gap: 5px;
    margin-left: auto;
    font-size: 7px;
    font-weight: bold;
}

.tray svg {
    width: 9px;
    height: 9px;
}

.tray i {
    width: 4px;
    height: 18px;
    background-color: #434343;
}

.watermark {
    position: absolute;
    right: 21px;
    bottom: 13px;
    color: #fff;
    font-size: 13px;
    line-height: 18px;
    font-weight: bold;
    text-shadow: 1px 1px 2px #000, 0 0 5px #000;
}
```
